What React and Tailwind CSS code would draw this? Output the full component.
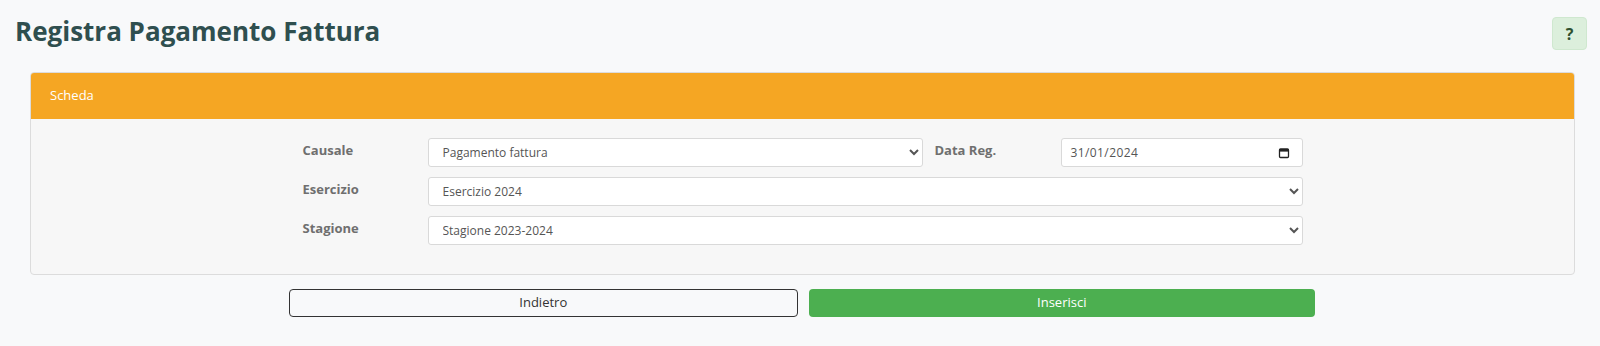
function Field({ label, children, className = "" }) {
  return (
    <div className={`flex ${className}`}>
      <label className="w-[125px] shrink-0 pt-[3px] text-[13px] font-bold text-[#6f6f6f]">{label}</label>
      {children}
    </div>
  );
}

function NativeSelect({ value, options }) {
  return (
    <select
      defaultValue={value}
      className="h-[29px] w-full rounded-[3px] border border-[#d9d9d9] bg-white pl-[10px] pr-[6px] text-[12px] text-[#555]"
    >
      {options.map((o) => (
        <option key={o}>{o}</option>
      ))}
    </select>
  );
}

function DateBox({ value }) {
  return (
    <div className="flex h-[29px] w-full items-center justify-between rounded-[3px] border border-[#d9d9d9] bg-white pl-[9px] pr-[12px] text-[12px] text-[#555]">
      <span className="tracking-[0.4px]">{value}</span>
      <svg width="12" height="12" viewBox="0 0 12 12" className="text-[#222]">
        <rect x="1.5" y="2" width="9" height="8.5" rx="1" fill="none" stroke="currentColor" strokeWidth="1.3" />
        <rect x="1.5" y="2" width="9" height="2.6" fill="currentColor" />
      </svg>
    </div>
  );
}

export default function App() {
  return (
    <div className="min-h-[346px] bg-[#f8f9fa] font-['Open_Sans',sans-serif]">
      <div className="flex items-start justify-between pl-[15px] pr-[13px] pt-[14px]">
        <h1 className="text-[26px] font-bold leading-[35px] text-[#2f4f4f]">Registra Pagamento Fattura</h1>
        <button
          type="button"
          className="mt-[3px] flex h-[33px] w-[35px] items-center justify-center rounded-[4px] border border-[#cfe8cf] bg-[#dcefdc] text-[16px] font-bold text-[#2f4f2f]"
        >
          ?
        </button>
      </div>

      <div className="ml-[30px] mr-[25px] mt-[22px] overflow-hidden rounded-[4px] border border-[#dcdcdc] bg-[#f7f7f7]">
        <div className="flex h-[46px] items-center bg-[#f5a623] pl-[19px] text-[13px] text-white">Scheda</div>
        <div className="mx-auto flex w-[1000px] flex-col gap-[10px] pb-[29px] pt-[19px]">
          <div className="flex">
            <Field label="Causale" className="w-[620px]">
              <NativeSelect value="Pagamento fattura" options={["Pagamento fattura"]} />
            </Field>
            <div className="ml-[12px] flex flex-1">
              <label className="w-[126px] shrink-0 pt-[3px] text-[13px] font-bold text-[#6f6f6f]">Data Reg.</label>
              <DateBox value="31/01/2024" />
            </div>
          </div>
          <Field label="Esercizio">
            <NativeSelect value="Esercizio 2024" options={["Esercizio 2024"]} />
          </Field>
          <Field label="Stagione">
            <NativeSelect value="Stagione 2023-2024" options={["Stagione 2023-2024"]} />
          </Field>
        </div>
      </div>

      <div className="mx-auto mt-[14px] flex w-[1026px] translate-x-[2px] gap-[11px]">
        <button
          type="button"
          className="h-[28px] flex-1 rounded-[4px] border border-[#333] bg-transparent text-[13px] text-[#333]"
        >
          Indietro
        </button>
        <button
          type="button"
          className="h-[28px] flex-1 rounded-[4px] bg-[#4caf50] text-[13px] text-white"
        >
          Inserisci
        </button>
      </div>
    </div>
  );
}
